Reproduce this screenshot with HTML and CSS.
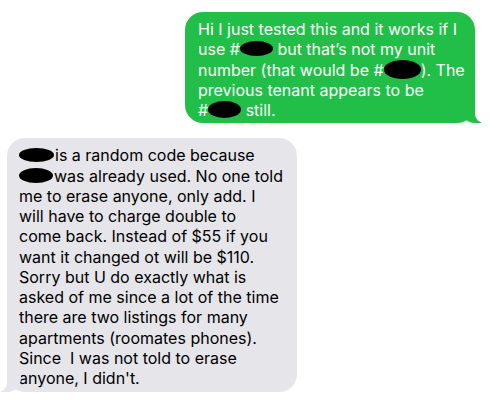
FILE: index.html
```html
<!DOCTYPE html>
<html>
<head>
<meta charset="utf-8">
<link rel="stylesheet" href="styles.css">
</head>
<body>
<div class="thread">
  <div class="bubble sent">Hi I just tested this and it works if I<br>use #<span class="blot b1"></span> but that’s not my unit<br>number (that would be #<span class="blot b2"></span>). The<br>previous tenant appears to be<br>#<span class="blot b3"></span> still.</div>
  <div class="bubble received"><span class="blot b4"></span>is a random code because<br><span class="blot b5"></span>was already used. No one told<br>me to erase anyone, only add. I<br>will have to charge double to<br>come back. Instead of $55 if you<br>want it changed ot will be $110.<br>Sorry but U do exactly what is<br>asked of me since a lot of the time<br>there are two listings for many<br>apartments (roomates phones).<br>Since&nbsp; I was not told to erase<br>anyone, I didn't.</div>
</div>
</body>
</html>
```

FILE: styles.css
```css
html, body {
  margin: 0;
  padding: 0;
  background: #ffffff;
}
.thread {
  display: flex;
  flex-direction: column;
  padding-top: 12px;
  gap: 15px;
}
.bubble {
  position: relative;
  box-sizing: border-box;
  width: 290px;
  border-radius: 18px;
  font-family: "Inter", "Liberation Sans", sans-serif;
  font-size: 16px;
  line-height: 20.25px;
  white-space: nowrap;
}
.sent {
  align-self: flex-end;
  margin-right: 15px;
  background: #21bf48;
  color: #ffffff;
  padding: 7px 13px 3px 13px;
}
.received {
  align-self: flex-start;
  margin-left: 7px;
  background: #e5e5ea;
  color: #000000;
  padding: 7px 12px 4px 12px;
}
.sent::before {
  content: "";
  position: absolute;
  bottom: 0;
  right: -6px;
  width: 20px;
  height: 18px;
  background: #21bf48;
  border-bottom-left-radius: 14px;
}
.sent::after {
  content: "";
  position: absolute;
  bottom: 0;
  right: -12px;
  width: 12px;
  height: 18px;
  background: #ffffff;
  border-bottom-left-radius: 9px;
}
.received::before {
  content: "";
  position: absolute;
  bottom: 0;
  left: -6px;
  width: 20px;
  height: 18px;
  background: #e5e5ea;
  border-bottom-right-radius: 14px;
}
.received::after {
  content: "";
  position: absolute;
  bottom: 0;
  left: -12px;
  width: 12px;
  height: 18px;
  background: #ffffff;
  border-bottom-right-radius: 9px;
}
.blot {
  display: inline-block;
  background: #000000;
  border-radius: 50%;
  vertical-align: middle;
}
.b1 { width: 33px; height: 15px; margin-top: -4px; }
.b2 { width: 37px; height: 19px; margin-top: -4px; }
.b3 { width: 33px; height: 17px; margin-top: -4px; }
.b4 { width: 35px; height: 14px; margin-right: 1px; margin-top: -4px; }
.b5 { width: 34px; height: 15px; margin-right: 1px; margin-top: -4px; }
```
